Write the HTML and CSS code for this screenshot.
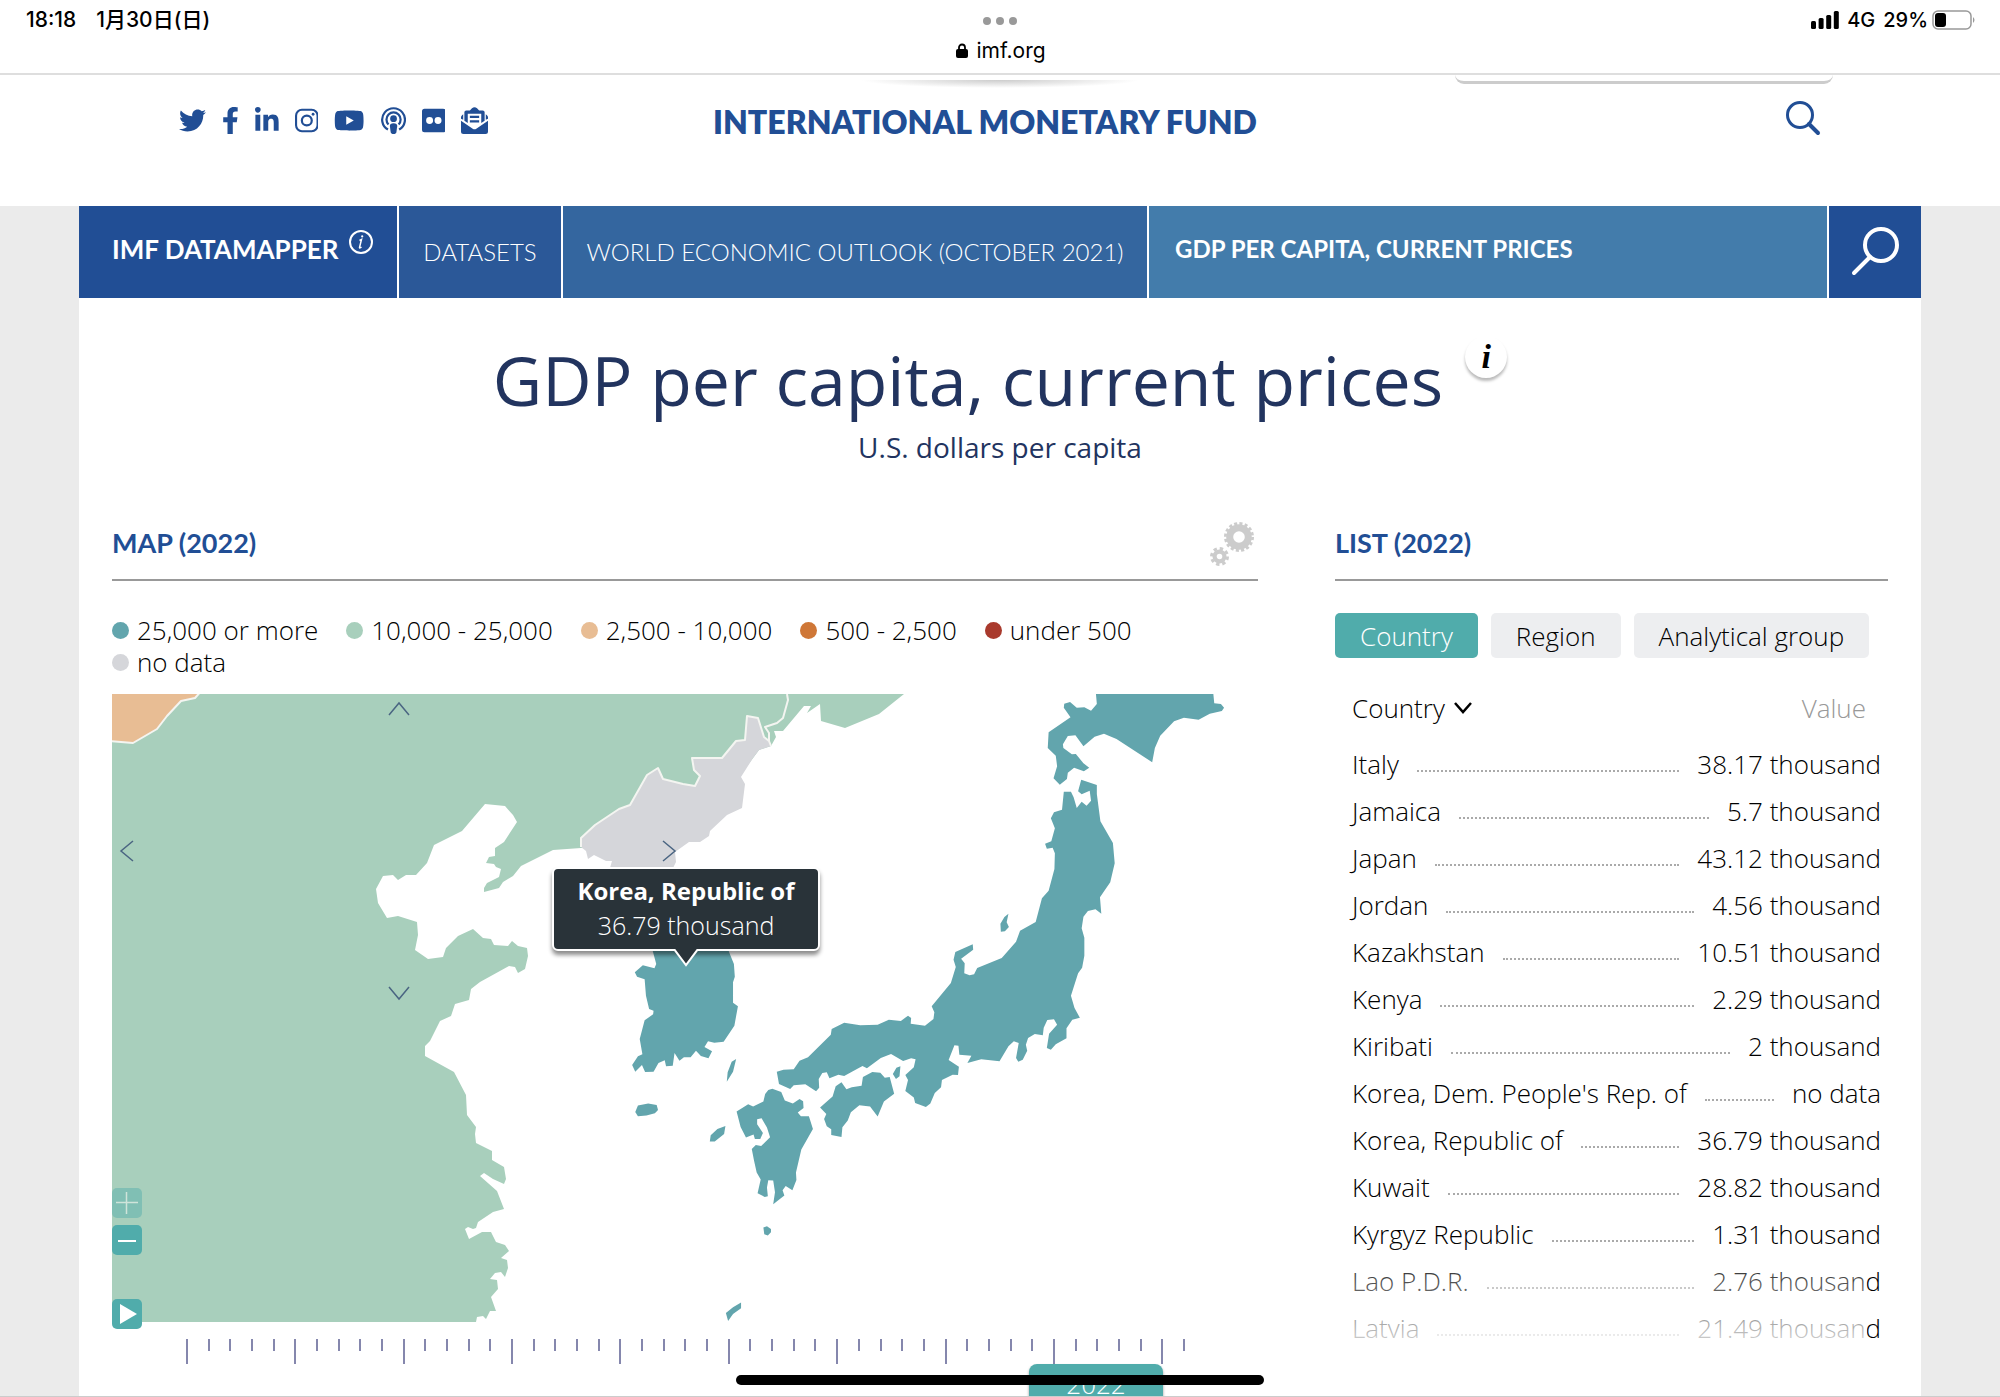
FILE: index.html
```html
<!DOCTYPE html>
<html lang="en">
<head>
<meta charset="utf-8">
<meta name="viewport" content="width=device-width, initial-scale=1">
<title>GDP per capita, current prices</title>
<link rel="stylesheet" href="styles.css">
</head>
<body>
<div class="status">
  <div class="status-left"><span>18:18</span><span>1月30日(日)</span></div>
  <div class="status-mid">
    <svg class="dots" viewBox="0 0 36 10" aria-hidden="true"><circle cx="5" cy="5" r="4"/><circle cx="18" cy="5" r="4"/><circle cx="31" cy="5" r="4"/></svg>
    <div class="address">
      <svg class="lock" viewBox="0 0 12 16" aria-hidden="true"><rect y="6" width="12" height="9" rx="2"/><path d="M3 7V4.500a3 3 0 0 1 6 0V7" fill="none" stroke="#000" stroke-width="1.800"/></svg>
      <span>imf.org</span>
    </div>
  </div>
  <div class="status-right">
    <svg class="signal" viewBox="0 0 28 18" aria-hidden="true"><rect y="10" width="5" height="8" rx="1.500"/><rect x="7.600" y="7" width="5" height="11" rx="1.500"/><rect x="15.200" y="4" width="5" height="14" rx="1.500"/><rect x="22.800" width="5" height="18" rx="1.500"/></svg>
    <span>4G</span><span>29%</span>
    <svg class="battery" viewBox="0 0 44 20" aria-hidden="true"><rect x="1" y="1" width="38" height="18" rx="5" fill="none" stroke="#999" stroke-width="1.500"/><rect x="3" y="3" width="11" height="14" rx="3"/><path d="M41 7q3 3 0 6z" fill="#999"/></svg>
  </div>
</div>

<div class="page">
  <header class="site-head">
    <div class="menu-shadow"></div>
    <div class="menu-edge"></div>
    <nav class="social" aria-label="Social media">
      <a href="#" aria-label="Twitter"><svg viewBox="0 0 512 512"><path d="M459.370 151.716c.325 4.548.325 9.097.325 13.645 0 138.720-105.583 298.558-298.558 298.558-59.452 0-114.680-17.219-161.137-47.106 8.447.974 16.568 1.299 25.340 1.299 49.055 0 94.213-16.568 130.274-44.832-46.132-.975-84.792-31.188-98.112-72.772 6.498.974 12.995 1.624 19.818 1.624 9.421 0 18.843-1.300 27.614-3.573-48.081-9.747-84.143-51.980-84.143-102.985v-1.299c13.969 7.797 30.214 12.670 47.431 13.319-28.264-18.843-46.781-51.005-46.781-87.391 0-19.492 5.197-37.360 14.294-52.954 51.655 63.675 129.300 105.258 216.365 109.807-1.624-7.797-2.599-15.918-2.599-24.040 0-57.828 46.782-104.934 104.934-104.934 30.213 0 57.502 12.670 76.670 33.137 23.715-4.548 46.456-13.320 66.599-25.340-7.798 24.366-24.366 44.833-46.132 57.827 21.117-2.273 41.584-8.122 60.426-16.243-14.292 20.791-32.161 39.308-52.628 54.253z"/></svg></a>
      <a href="#" aria-label="Facebook"><svg viewBox="0 0 320 512"><path d="M279.140 288l14.220-92.660h-88.910v-60.130c0-25.350 12.420-50.060 52.240-50.060h40.420V6.260S260.430 0 225.360 0c-73.220 0-121.080 44.380-121.080 124.720v70.620H22.890V288h81.390v224h100.170V288z"/></svg></a>
      <a href="#" aria-label="LinkedIn"><svg viewBox="0 0 448 512"><path d="M100.280 448H7.400V148.900h92.880zM53.790 108.100C24.090 108.100 0 83.500 0 53.800a53.790 53.790 0 0 1 107.580 0c0 29.700-24.100 54.300-53.790 54.300zM447.900 448h-92.680V302.400c0-34.700-.7-79.200-48.290-79.200-48.290 0-55.690 37.700-55.690 76.700V448h-92.780V148.900h89.080v40.800h1.300c12.400-23.500 42.690-48.300 87.880-48.300 94 0 111.280 61.900 111.280 142.300V448z"/></svg></a>
      <a href="#" aria-label="Instagram"><svg viewBox="0 0 448 512"><rect x="20" y="52" width="408" height="408" rx="112" fill="none" stroke="#214e95" stroke-width="40"/><circle cx="224" cy="256" r="94" fill="none" stroke="#214e95" stroke-width="42"/><circle cx="343" cy="137" r="27"/></svg></a>
      <a href="#" aria-label="YouTube"><svg viewBox="0 0 576 512"><path d="M549.655 124.083c-6.281-23.650-24.787-42.276-48.284-48.597C458.781 64 288 64 288 64S117.220 64 74.629 75.486c-23.497 6.322-42.003 24.947-48.284 48.597-11.412 42.867-11.412 132.305-11.412 132.305s0 89.438 11.412 132.305c6.281 23.650 24.787 41.500 48.284 47.821C117.220 448 288 448 288 448s170.780 0 213.371-11.486c23.497-6.321 42.003-24.171 48.284-47.821 11.412-42.867 11.412-132.305 11.412-132.305s0-89.438-11.412-132.305zm-317.510 213.508V175.185l142.739 81.205-142.739 81.201z"/></svg></a>
      <a href="#" aria-label="Podcasts"><svg viewBox="-14 0 476 512"><g fill="none" stroke="#214e95" stroke-width="42"><path d="M118 428a216 216 0 1 1 212 0"/><path d="M128 330a134 134 0 1 1 192 0"/></g><circle cx="224" cy="222" r="64"/><path d="M224 306c46 0 74 20 70 56l-16 116c-4 24-22 34-54 34s-50-10-54-34l-16-116c-4-36 24-56 70-56z"/></svg></a>
      <a href="#" aria-label="Flickr"><svg viewBox="0 0 448 512"><path fill-rule="evenodd" d="M48 32h352a48 48 0 0 1 48 48v352a48 48 0 0 1-48 48H48a48 48 0 0 1-48-48V80a48 48 0 0 1 48-48zM144 190a66 66 0 1 0 0 132 66 66 0 0 0 0-132zm160 0a66 66 0 1 0 0 132 66 66 0 0 0 0-132z"/></svg></a>
      <a href="#" aria-label="Newsletter"><svg viewBox="0 0 512 512"><path fill-rule="evenodd" d="M0 262v202a48 48 0 0 0 48 48h416a48 48 0 0 0 48-48V262L290 412q-34 24-68 0zM64 260V100a36 36 0 0 1 36-36h68l40-40q48-40 96 0l40 40h68a36 36 0 0 1 36 36v160l-64 44V128H128v176zM0 224V196q0-24 20-40l22-18v106zM512 224V196q0-24-20-40l-22-18v106zM168 168h176v40H168zM168 252h176v40H168z"/></svg></a>
    </nav>
    <a class="brand" href="#">INTERNATIONAL MONETARY FUND</a>
    <button class="head-search" type="button" aria-label="Search"><svg viewBox="0 0 36 36"><circle cx="15" cy="15" r="12.500"/><path d="M24 24l9 9" stroke-width="4" stroke-linecap="round"/></svg></button>
  </header>

  <div class="body">
    <div class="sheet">
      <nav class="crumbs" aria-label="DataMapper">
        <a class="crumb crumb-home" href="#"><span>IMF DATAMAPPER</span><svg class="info-ring" viewBox="0 0 26 28" aria-hidden="true"><circle cx="13" cy="13" r="11"/><path class="stem" d="M11.500 11.500l2-1-2 8q0 1 2-.5"/><circle class="dot" cx="14.200" cy="7.400" r="1.100"/></svg></a>
        <a class="crumb crumb-sets" href="#">DATASETS</a>
        <a class="crumb crumb-weo" href="#">WORLD ECONOMIC OUTLOOK (OCTOBER 2021)</a>
        <a class="crumb crumb-now" href="#">GDP PER CAPITA, CURRENT PRICES</a>
        <button class="crumb crumb-search" type="button" aria-label="Search datasets"><svg viewBox="0 0 50 50"><circle cx="31" cy="18" r="16"/><path d="M20 30L4 46" stroke-width="4" stroke-linecap="round"/></svg></button>
      </nav>

      <div class="title">
        <h1>GDP per capita, current prices</h1>
        <button class="title-info" type="button" aria-label="About this indicator">i</button>
      </div>
      <p class="unit">U.S. dollars per capita</p>

      <div class="columns">
        <section class="map-col">
          <div class="col-head">
            <h2>MAP (2022)</h2>
            <button class="gears" type="button" aria-label="Settings"><svg viewBox="0 0 44 44">
              <circle cx="29" cy="15" r="9.300" stroke-width="7"/>
              <circle cx="29" cy="15" r="13.600" stroke-width="2.800" stroke-dasharray="3.100 2.240"/>
              <circle cx="9.500" cy="34.500" r="4.900" stroke-width="4.200"/>
              <circle cx="9.500" cy="34.500" r="8" stroke-width="3" stroke-dasharray="3.400 2.880"/>
            </svg></button>
          </div>
          <ul class="legend">
            <li><i class="swatch c1"></i>25,000 or more</li>
            <li><i class="swatch c2"></i>10,000 - 25,000</li>
            <li><i class="swatch c3"></i>2,500 - 10,000</li>
            <li><i class="swatch c4"></i>500 - 2,500</li>
            <li><i class="swatch c5"></i>under 500</li>
            <li><i class="swatch c6"></i>no data</li>
          </ul>
          <div class="map">
            <svg class="land" viewBox="112 695 1146 628" role="img" aria-label="Map of East Asia coloured by GDP per capita">
              <!-- China and the Russian coast -->
              <path fill="#a8cfbc" d="M112 695H904L879 715 845 729 821 722 820 705 807 714 811 707H804L783 732H774L776 738 771 747 759 751 730 790 720 800 640 850 581 849 553 851 521 867 513 877 503 883 499 889 484 893V889L487 884 499 878 501 870 496 868 494 865 486 864 489 858 495 857V849L504 843 517 823 513 816 505 807 485 805 462 832 434 846 427 864 416 876 406 876 398 881 393 876 383 877 376 890 378 904 387 919 398 917 417 923 418 936 415 951 428 960 443 958 446 949 458 937 473 930 483 939 491 940 494 946 508 947 512 942 518 947 527 949 528 957 525 970 518 974 515 968 509 967 480 983 471 990 469 1001 455 1005 451 1017 440 1022 430 1042 425 1047V1057L454 1073 466 1096 467 1116 476 1128 475 1135 476 1144 492 1152V1161L504 1168 506 1180 504 1185 493 1180 484 1174 480 1177 497 1192 504 1210 493 1213 478 1223 476 1229 473 1230 468 1228 465 1230 469 1240 482 1233H491L496 1243 505 1246 509 1252 501 1259 507 1261 508 1269 505 1278 501 1273 495 1274 490 1280 497 1281 498 1290 491 1298 496 1312H490L486 1320 483 1317 477 1318 476 1323H112Z"/>
              <path class="border" d="M787 695L788 701 783 719 777 724 765 728 769 734V742"/>
              <!-- Mongolia -->
              <path class="border" fill="#e8bd94" d="M110 690H203L195 699 181 702 167 717 157 730 133 744 110 742Z"/>
              <!-- North Korea -->
              <path fill="#d5d6da" d="M771 747L759 751 753 759 741 778 745 785 742 809 727 816 710 832 709 837 700 843H689L675 853 676 863 673 869H610L612 862 606 862 594 856 588 860 586 852 581 848V839L595 826 619 810 630 806 647 776 658 769 663 780 683 785 695 787 700 777 694 771 692 759H722L736 742 745 741 747 717 758 719 764 738 769 742Z"/>
              <path class="border" d="M581 848V839L595 826 619 810 630 806 647 776 658 769 663 780 683 785 695 787 700 777 694 771 692 759H722L736 742 745 741 747 717 758 719 764 738 769 742 771 747"/>
              <g fill="#62a5ad" transform="translate(550 680) scale(.4464 .3333)">
                <!-- South Korea, Jeju -->
                <path d="M230 815L238 855 234 868 208 859 190 880 195 893 212 901 215 950 222 990 232 995 231 1006 212 1024 201 1080 207 1126 197 1132 184 1158 191 1178 206 1158 213 1179 232 1178 243 1152 257 1144 260 1162 275 1160 279 1122 290 1145 300 1135 315 1135 327 1115 338 1131 355 1138 363 1117 346 1104 354 1087 368 1091 389 1088 413 1040 421 982 410 971 410 910 414 893 412 855 400 815Z"/>
                <path d="M197 1280L220 1274 239 1278 242 1293 235 1303 216 1310 197 1312 191 1299Z"/>
                <!-- Hokkaido -->
                <path d="M1223 45L1225 75 1212 95 1197 85 1180 86 1165 69 1152 74 1151 86 1166 115 1117 160 1115 207 1133 230 1136 262 1128 298 1142 317 1158 300 1160 281 1174 266 1196 277 1208 266 1195 253 1178 225 1169 226 1150 207 1149 196 1160 171 1177 169 1195 202 1220 173 1241 164 1269 180 1349 250 1355 207 1367 170 1398 127 1420 116 1453 122 1478 104 1505 96 1510 86 1503 75 1488 73 1486 45Z"/>
                <!-- Honshu -->
                <path d="M1190 302L1225 318 1225 345 1233 427 1261 492 1265 553 1255 610 1232 655 1235 704 1222 691 1205 696 1195 713 1191 748 1197 776 1197 830 1192 866 1183 883 1167 950 1175 987 1187 1016 1170 1022 1157 1048 1157 1078 1133 1096 1122 1112 1113 1107 1118 1064 1136 1037 1129 1021 1114 1023 1106 1046 1104 1069 1086 1065 1071 1077 1066 1097 1069 1115 1059 1142 1049 1148 1044 1137 1050 1092 1039 1087 1027 1102 1007 1147 966 1141 935 1152 944 1130 917 1127 915 1100 906 1099 893 1143 916 1163 914 1188 902 1187 878 1203 876 1225 862 1242 852 1274 842 1284 818 1272 815 1256 796 1236 802 1203 796 1188 815 1165 819 1141 809 1138 791 1146 764 1125 741 1137 710 1168 700 1161 659 1191 646 1187 626 1198 620 1180 610 1182 602 1200 603 1226 596 1237 572 1216 546 1219 538 1230 513 1215 508 1178 523 1172 546 1171 559 1145 578 1135 629 1067 631 1050 659 1031 695 1039 734 1037 759 1022 786 1026 802 1010 809 1017 808 1034 840 1040 859 1020 861 1000 855 982 898 912 909 864 904 842 908 819 947 796 948 812 921 839 929 853 928 883 940 889 950 886 957 867 1012 837 1044 788 1053 755 1088 729 1102 658 1117 635 1130 570 1131 523 1126 506 1113 509 1109 494 1123 487 1131 448 1122 418 1129 400 1147 392 1151 338 1167 338 1173 355 1180 387 1191 368 1202 380 1212 365 1209 335 1191 346 1183 337Z"/>
                <!-- Shikoku, Kyushu -->
                <g transform="translate(112 960)">
                  <path d="M541 250L552 271 564 265 586 260 589 234 610 219 628 221 638 236 649 234 659 284 636 308 622 353 605 323 581 319 562 340 555 365 543 385 541 414 518 408 518 391 508 382 502 360 507 345 493 326 521 293 528 262Z"/>
                  <path d="M386 269L406 279 414 305 432 314 447 300 455 307 456 327 443 341 450 352 468 352 477 390 451 452 439 521 440 543 431 574 416 561 409 574 413 590 388 616 392 580 388 545 377 544 374 566 376 592 369 594 353 583 360 542 351 521 345 485 340 450 349 438 361 441 381 415 374 386 362 358 352 361 352 376 365 402 359 420 347 420 344 407 327 416 315 384 306 338 332 316 343 323 366 308 370 285 377 273Z"/>
                </g>
                <!-- Tsushima, Goto, Yakushima, Amami, Awaji, Sado -->
                <path d="M417 1140L407 1148 398 1180 396 1208 410 1178ZM393 1341L375 1350 360 1369 358 1388 369 1388 390 1365ZM478 1646L486 1642 495 1650 495 1660 488 1670 480 1666ZM428 1871L410 1885 394 1902 399 1926 410 1905 428 1888ZM785 1162L776 1166 768 1185 775 1200 783 1192ZM1027 704L1018 714 1009 734 1010 758 1019 757 1028 744 1023 730Z"/>
              </g>
            </svg>
            <button class="pan pan-up" type="button" aria-label="Pan up"><svg viewBox="0 0 24 24"><path d="M2 18L12 6l10 12"/></svg></button>
            <button class="pan pan-left" type="button" aria-label="Pan left"><svg viewBox="0 0 24 24"><path d="M18 2L6 12l12 10"/></svg></button>
            <button class="pan pan-right" type="button" aria-label="Pan right"><svg viewBox="0 0 24 24"><path d="M6 2l12 10L6 22"/></svg></button>
            <button class="pan pan-down" type="button" aria-label="Pan down"><svg viewBox="0 0 24 24"><path d="M2 6l10 12L22 6"/></svg></button>
            <div class="tools">
              <button class="tool" type="button" aria-label="Zoom in" disabled><svg viewBox="0 0 30 30"><path d="M4 14.500h22M14.500 4v22"/></svg></button>
              <button class="tool" type="button" aria-label="Zoom out"><svg viewBox="0 0 30 30"><path d="M6 16h18" stroke-width="2"/></svg></button>
              <button class="tool tool-play" type="button" aria-label="Play"><svg viewBox="0 0 30 30"><path d="M8 5l17 10L8 25z" fill="#fff" stroke="none"/></svg></button>
            </div>
            <div class="tip" role="tooltip"><strong>Korea, Republic of</strong><span>36.79 thousand</span><svg class="tip-tail" viewBox="0 0 24 18" aria-hidden="true"><path d="M0 0L12 16 24 0" fill="#293339" stroke="#fff" stroke-width="2"/></svg></div>
          </div>
          <div class="timeline">
            <div class="ticks"><i></i><i></i><i></i><i></i><i></i><i></i><i></i><i></i><i></i><i></i><i></i><i></i><i></i><i></i><i></i><i></i><i></i><i></i><i></i><i></i><i></i><i></i><i></i><i></i><i></i><i></i><i></i><i></i><i></i><i></i><i></i><i></i><i></i><i></i><i></i><i></i><i></i><i></i><i></i><i></i><i></i><i></i><i></i><i></i><i></i><i></i><i></i></div>
            <button class="year" type="button">2022</button>
          </div>
        </section>

        <section class="list-col">
          <div class="col-head"><h2>LIST (2022)</h2></div>
          <div class="tabs">
            <button class="tab tab-on" type="button">Country</button>
            <button class="tab" type="button">Region</button>
            <button class="tab" type="button">Analytical group</button>
          </div>
          <table class="values">
            <thead><tr><th class="sorted">Country<svg viewBox="0 0 20 14" aria-hidden="true"><path d="M2 2l8 9 8-9"/></svg></th><th class="unsorted">Value</th></tr></thead>
            <tbody>
              <tr><td class="name">Italy</td><td>38.17 thousand</td></tr>
              <tr><td class="name">Jamaica</td><td>5.7 thousand</td></tr>
              <tr><td class="name">Japan</td><td>43.12 thousand</td></tr>
              <tr><td class="name">Jordan</td><td>4.56 thousand</td></tr>
              <tr><td class="name">Kazakhstan</td><td>10.51 thousand</td></tr>
              <tr><td class="name">Kenya</td><td>2.29 thousand</td></tr>
              <tr><td class="name">Kiribati</td><td>2 thousand</td></tr>
              <tr><td class="name">Korea, Dem. People's Rep. of</td><td>no data</td></tr>
              <tr><td class="name">Korea, Republic of</td><td>36.79 thousand</td></tr>
              <tr><td class="name">Kuwait</td><td>28.82 thousand</td></tr>
              <tr><td class="name">Kyrgyz Republic</td><td>1.31 thousand</td></tr>
              <tr><td class="name">Lao P.D.R.</td><td>2.76 thousand</td></tr>
              <tr><td class="name">Latvia</td><td>21.49 thousand</td></tr>
            </tbody>
          </table>
          <div class="fade"></div>
        </section>
      </div>
    </div>
  </div>
</div>
<div class="home-bar"></div>
</body>
</html>
```
FILE: styles.css
```css
* { box-sizing: border-box; }

body {
  margin: 0;
  height: 100vh;
  display: flex;
  flex-direction: column;
  position: relative;
  overflow: hidden;
  background: #fff;
  color: #000;
  font: 300 26px/32px "Open Sans", "Noto Sans", sans-serif;
}

a { color: inherit; text-decoration: none; }
button { margin: 0; padding: 0; border: 0; background: none; font: inherit; color: inherit; }
h1, h2, p, ul { margin: 0; padding: 0; }
svg { display: block; }

/* tablet status bar */
.status {
  flex: none;
  display: grid;
  grid-template-columns: 1fr auto 1fr;
  height: 75px;
  padding: 0 26px;
  border-bottom: 2px solid #dedede;
  color: #000;
  font: 500 20px/40px Inter, "Noto Sans CJK JP", sans-serif;
}
.status-left { display: flex; gap: 20px; font-size: 21px; }
.status-mid { display: flex; flex-direction: column; align-items: center; padding-top: 16px; gap: 10px; }
.dots { width: 36px; height: 10px; fill: #999; }
.address { display: flex; align-items: center; gap: 8px; padding-left: 2px; font-weight: 400; font-size: 21px; line-height: 30px; }
.lock { width: 12px; height: 16px; }
.status-right { display: flex; justify-content: flex-end; align-items: center; gap: 8px; height: 40px; margin-right: -2px; }
.signal { width: 28px; height: 18px; }
.battery { width: 44px; height: 20px; margin-left: -4px; }

.page { flex: 1; min-height: 0; display: flex; flex-direction: column; overflow: hidden; border-bottom: 1px solid #ccc; }

/* site header */
.site-head {
  flex: none;
  position: relative;
  display: grid;
  grid-template-columns: 1fr auto 1fr;
  align-items: start;
  height: 131px;
  padding: 21px 179px 0;
  color: #214e95;
  font-family: Lato, sans-serif;
}
.social { display: flex; gap: 16px; padding-top: 11px; }
.social svg { height: 27px; fill: #214e95; }
.brand { padding-right: 30px; font-weight: 800; font-size: 32px; line-height: 52px; }
.head-search { justify-self: end; padding-top: 4px; }
.head-search svg { width: 36px; height: 36px; fill: none; stroke: #214e95; stroke-width: 3; }
.menu-edge { position: absolute; top: 0; right: 167px; width: 378px; height: 9px; border-bottom: 3px solid #ccc; border-radius: 0 0 10px 10px; }
.menu-shadow { position: absolute; top: 5px; left: 0; right: 0; margin: 0 auto; width: 280px; height: 8px; background: radial-gradient(ellipse at top, #ccc, #fff 70%); }

/* grey surround with the white sheet */
.body { flex: 1 0 auto; display: flex; padding: 0 79px; background: #ebebeb; }
.sheet { flex: 1; min-width: 0; background: #fff; }

.crumbs { display: flex; gap: 2px; height: 92px; color: #fff; font: 400 24px/28px Lato, sans-serif; }
.crumb { display: flex; align-items: center; padding: 0 26px; }
.crumb-home { width: 318px; padding: 0 0 6px 33px; background: #214e95; font-weight: 700; font-size: 26px; white-space: nowrap; }
.info-ring { width: 26px; height: 28px; margin: 0 0 12px 10px; fill: none; stroke: #fff; stroke-width: 2; }
.info-ring .dot { fill: #fff; stroke: none; }
.info-ring .stem { stroke-width: 1.500; }
.crumb-sets, .crumb-weo { justify-content: center; padding: 0; font-weight: 300; white-space: nowrap; }
.crumb-sets { background: #2b5898; width: 162px; }
.crumb-weo { background: #34669f; width: 584px; }
.crumb-now { flex: 1; background: #437cab; font-weight: 700; padding-bottom: 6px; }
.crumb-search { width: 92px; padding: 0; justify-content: center; background: #214e95; }
.crumb-search svg { width: 50px; height: 50px; fill: none; stroke: #fff; stroke-width: 4; }

.title { display: flex; justify-content: center; gap: 22px; padding-top: 38px; color: #22345f; }
.title h1 { font-weight: 400; font-size: 68px; line-height: 88px; }
.title-info {
  width: 42px;
  height: 42px;
  border-radius: 50%;
  box-shadow: 0 3px 3px #bbb;
  color: #000;
  font: italic 700 34px/42px "Liberation Serif", serif;
}
.unit { padding-top: 6px; color: #22345f; text-align: center; font-weight: 400; font-size: 28px; line-height: 34px; }

.columns { display: grid; grid-template-columns: 1146fr 553fr; column-gap: 77px; padding: 54px 33px 0; }
.map-col, .list-col { min-width: 0; }
.col-head { display: flex; justify-content: space-between; align-items: center; height: 63px; border-bottom: 2px solid #999; padding-bottom: 12px; }
.col-head h2 { color: #214e95; font: 700 27px/32px Lato, sans-serif; }
.gears { padding: 2px 4px 0 0; }
.gears svg { width: 44px; height: 44px; fill: none; stroke: #ccc; }

.legend { display: flex; flex-wrap: wrap; column-gap: 28px; padding: 33px 64px 16px 0; list-style: none; }
.legend li { display: flex; align-items: center; gap: 8px; white-space: nowrap; }
.swatch { width: 17px; height: 17px; border-radius: 50%; }
.c1 { background: #62a5ad; }
.c2 { background: #a8cfbc; }
.c3 { background: #e8bd94; }
.c4 { background: #cf7737; }
.c5 { background: #a93a2d; }
.c6 { background: #d5d6da; }

.map { position: relative; }
.land { width: 100%; height: auto; }
.border { stroke: #f4f5f1; stroke-width: 2; stroke-linejoin: round; }
.border:not([fill]) { fill: none; }

.pan { position: absolute; }
.pan svg { width: 24px; height: 24px; fill: none; stroke: #4a6582; stroke-width: 1.500; }
.pan-up { left: 275px; top: 3px; }
.pan-left { left: 3px; top: 145px; }
.pan-right { left: 545px; top: 145px; }
.pan-down { left: 275px; top: 287px; }

.tools { position: absolute; left: 0; bottom: -7px; display: flex; flex-direction: column; gap: 7px; }
.tool { width: 30px; height: 30px; border-radius: 5px; background: #50acab; }
.tool svg { width: 30px; height: 30px; fill: none; stroke: #fff; stroke-width: 1.500; }
.tool:disabled { opacity: .45; }
.tool-play { margin-top: 37px; }

.tip {
  position: absolute;
  left: 440px;
  top: 173px;
  width: 268px;
  height: 84px;
  display: flex;
  flex-direction: column;
  align-items: center;
  padding-top: 4px;
  border: 2px solid #fff;
  border-radius: 6px;
  background: #293339;
  box-shadow: 0 4px 4px rgba(0, 0, 0, .45);
  color: #fff;
  font-size: 24px;
  line-height: 35px;
}
.tip strong { font-weight: 700; }
.tip span { font-size: 25px; }
.tip-tail { position: absolute; left: 120px; top: 80px; width: 24px; height: 18px; }

.timeline { margin: 17px 73px 0 74px; position: relative; }
.ticks { display: flex; justify-content: space-between; height: 25px; }
.ticks i { width: 2px; height: 12px; background: #8587ad; }
.ticks i:nth-child(5n + 1) { height: 25px; }
.year { position: absolute; left: 843px; top: 25px; width: 134px; height: 40px; border-radius: 8px 8px 4px 4px; background: #50acab; box-shadow: 0 2px 3px rgba(0, 0, 0, .4); color: #fff; line-height: 40px; }

.list-col { position: relative; }
.tabs { display: flex; gap: 13px; padding-top: 32px; }
.tab { height: 45px; padding: 0 25px; border-radius: 5px; background: #edeef0; white-space: nowrap; }
.tab-on { background: #50acab; color: #fff; }

.values { display: block; padding: 33px 7px 0 17px; }
.values thead, .values tbody { display: block; }
.values tr { display: flex; justify-content: space-between; height: 47px; line-height: 47px; }
.values thead tr { height: 50px; line-height: 34px; }
.values th { padding: 0; font-weight: 300; }
.values td { padding: 0; white-space: nowrap; }
.sorted { display: flex; gap: 8px; }
.sorted svg { width: 20px; height: 14px; margin-top: 10px; fill: none; stroke: #000; stroke-width: 2.500; }
.values .unsorted { padding-right: 15px; color: #999; }
.name { flex: 1; display: flex; }
.name::after { content: ""; flex: 1; height: 29px; margin: 0 18px; border-bottom: 2px dotted #aaa; }
.fade { position: absolute; left: 0; right: 21px; bottom: 0; height: 120px; background: linear-gradient(rgba(255, 255, 255, 0), #fff); pointer-events: none; }

.home-bar { position: absolute; left: 0; right: 0; bottom: 12px; width: 528px; height: 10px; margin: 0 auto; border-radius: 5px; background: #000; }
```
